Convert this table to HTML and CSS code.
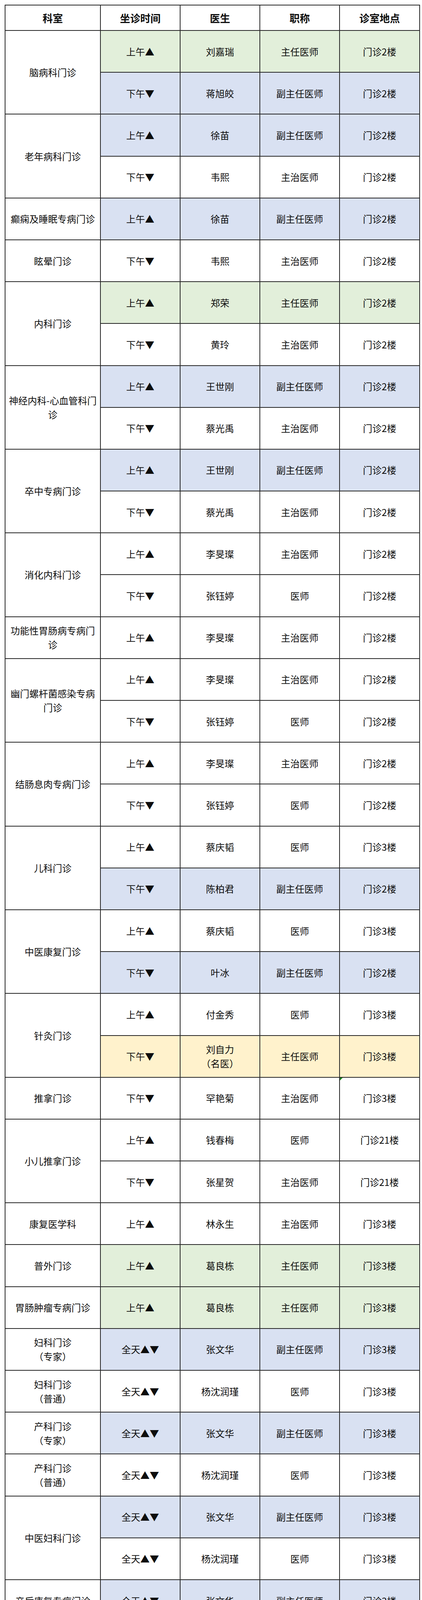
FILE: index.html
```html
<!DOCTYPE html>
<html lang="zh-CN">
<head>
<meta charset="utf-8">
<title>门诊排班表</title>
<link rel="stylesheet" href="styles.css">
</head>
<body>
<div class="page">
<table class="sched">
<colgroup>
<col class="c-dept"><col class="c-time"><col class="c-doc"><col class="c-title"><col class="c-loc">
</colgroup>
<thead>
<tr class="head"><th>科室</th><th>坐诊时间</th><th>医生</th><th>职称</th><th>诊室地点</th></tr>
</thead>
<tbody>
<tr class="green"><td class="dept" rowspan="2">脑病科门诊</td><td>上午▲</td><td>刘嘉瑞</td><td>主任医师</td><td>门诊2楼</td></tr>
<tr class="blue"><td>下午▼</td><td>蒋旭皎</td><td>副主任医师</td><td>门诊2楼</td></tr>

<tr class="blue"><td class="dept" rowspan="2">老年病科门诊</td><td>上午▲</td><td>徐苗</td><td>副主任医师</td><td>门诊2楼</td></tr>
<tr><td>下午▼</td><td>韦熙</td><td>主治医师</td><td>门诊2楼</td></tr>

<tr class="blue"><td class="dept">癫痫及睡眠专病门诊</td><td>上午▲</td><td>徐苗</td><td>副主任医师</td><td>门诊2楼</td></tr>

<tr><td class="dept">眩晕门诊</td><td>下午▼</td><td>韦熙</td><td>主治医师</td><td>门诊2楼</td></tr>

<tr class="green"><td class="dept" rowspan="2">内科门诊</td><td>上午▲</td><td>郑荣</td><td>主任医师</td><td>门诊2楼</td></tr>
<tr><td>下午▼</td><td>黄玲</td><td>主治医师</td><td>门诊2楼</td></tr>

<tr class="blue"><td class="dept" rowspan="2">神经内科-心血管科门诊</td><td>上午▲</td><td>王世刚</td><td>副主任医师</td><td>门诊2楼</td></tr>
<tr><td>下午▼</td><td>蔡光禹</td><td>主治医师</td><td>门诊2楼</td></tr>

<tr class="blue"><td class="dept" rowspan="2">卒中专病门诊</td><td>上午▲</td><td>王世刚</td><td>副主任医师</td><td>门诊2楼</td></tr>
<tr><td>下午▼</td><td>蔡光禹</td><td>主治医师</td><td>门诊2楼</td></tr>

<tr><td class="dept" rowspan="2">消化内科门诊</td><td>上午▲</td><td>李旻璨</td><td>主治医师</td><td>门诊2楼</td></tr>
<tr><td>下午▼</td><td>张钰婷</td><td>医师</td><td>门诊2楼</td></tr>

<tr><td class="dept">功能性胃肠病专病门诊</td><td>上午▲</td><td>李旻璨</td><td>主治医师</td><td>门诊2楼</td></tr>

<tr><td class="dept" rowspan="2">幽门螺杆菌感染专病门诊</td><td>上午▲</td><td>李旻璨</td><td>主治医师</td><td>门诊2楼</td></tr>
<tr><td>下午▼</td><td>张钰婷</td><td>医师</td><td>门诊2楼</td></tr>

<tr><td class="dept" rowspan="2">结肠息肉专病门诊</td><td>上午▲</td><td>李旻璨</td><td>主治医师</td><td>门诊2楼</td></tr>
<tr><td>下午▼</td><td>张钰婷</td><td>医师</td><td>门诊2楼</td></tr>

<tr><td class="dept" rowspan="2">儿科门诊</td><td>上午▲</td><td>蔡庆韬</td><td>医师</td><td>门诊3楼</td></tr>
<tr class="blue"><td>下午▼</td><td>陈柏君</td><td>副主任医师</td><td>门诊2楼</td></tr>

<tr><td class="dept" rowspan="2">中医康复门诊</td><td>上午▲</td><td>蔡庆韬</td><td>医师</td><td>门诊3楼</td></tr>
<tr class="blue"><td>下午▼</td><td>叶冰</td><td>副主任医师</td><td>门诊2楼</td></tr>

<tr><td class="dept" rowspan="2">针灸门诊</td><td>上午▲</td><td>付金秀</td><td>医师</td><td>门诊3楼</td></tr>
<tr class="yellow"><td>下午▼</td><td>刘自力<br>（名医）</td><td>主任医师</td><td>门诊3楼</td></tr>

<tr><td class="dept">推拿门诊</td><td>下午▼</td><td>罕艳菊</td><td>主治医师</td><td class="flag">门诊3楼</td></tr>

<tr><td class="dept" rowspan="2">小儿推拿门诊</td><td>上午▲</td><td>钱春梅</td><td>医师</td><td>门诊21楼</td></tr>
<tr><td>下午▼</td><td>张星贺</td><td>主治医师</td><td>门诊21楼</td></tr>

<tr><td class="dept">康复医学科</td><td>上午▲</td><td>林永生</td><td>主治医师</td><td>门诊3楼</td></tr>

<tr class="green"><td class="dept">普外门诊</td><td>上午▲</td><td>葛良栋</td><td>主任医师</td><td>门诊3楼</td></tr>

<tr class="green"><td class="dept">胃肠肿瘤专病门诊</td><td>上午▲</td><td>葛良栋</td><td>主任医师</td><td>门诊3楼</td></tr>

<tr class="blue"><td class="dept">妇科门诊<br>（专家）</td><td>全天▲▼</td><td>张文华</td><td>副主任医师</td><td>门诊3楼</td></tr>

<tr><td class="dept">妇科门诊<br>（普通）</td><td>全天▲▼</td><td>杨沈润瑾</td><td>医师</td><td>门诊3楼</td></tr>

<tr class="blue"><td class="dept">产科门诊<br>（专家）</td><td>全天▲▼</td><td>张文华</td><td>副主任医师</td><td>门诊3楼</td></tr>

<tr><td class="dept">产科门诊<br>（普通）</td><td>全天▲▼</td><td>杨沈润瑾</td><td>医师</td><td>门诊3楼</td></tr>

<tr class="blue"><td class="dept" rowspan="2">中医妇科门诊</td><td>全天▲▼</td><td>张文华</td><td>副主任医师</td><td>门诊3楼</td></tr>
<tr><td>全天▲▼</td><td>杨沈润瑾</td><td>医师</td><td>门诊3楼</td></tr>

<tr class="blue"><td class="dept">产后康复专病门诊</td><td>全天▲▼</td><td>张文华</td><td>副主任医师</td><td>门诊3楼</td></tr>

<tr class="blue"><td class="dept">更年期门诊</td><td>全天▲▼</td><td>张文华</td><td>副主任医师</td><td>门诊3楼</td></tr>

<tr><td class="dept">眼耳鼻喉科</td><td>全天▲▼</td><td>李璐璐</td><td>主治医师</td><td>门诊3楼</td></tr>

<tr><td class="dept">眼科</td><td>全天▲▼</td><td>杨静晖</td><td>主治医师</td><td>门诊3楼</td></tr>

<tr><td class="dept" rowspan="2">皮肤科</td><td>全天▲▼</td><td>杨榆婷</td><td>主治医师</td><td>门诊3楼</td></tr>
<tr><td>上午▲午间<span class="tofu">▯</span></td><td>凡福青</td><td>医师</td><td>门诊3楼</td></tr>

<tr><td class="dept" rowspan="2">口腔科门诊</td><td>全天▲▼</td><td>斯那永次</td><td>医师</td><td>门诊4楼</td></tr>
<tr class="blue"><td>上午▲</td><td>李光泽</td><td>副主任医师</td><td>门诊4楼</td></tr>

<tr><td class="dept">骨伤科·疼痛科</td><td>上午▲</td><td>崔菁</td><td>主治医师</td><td>门诊3楼</td></tr>

<tr><td class="dept">体重管理门诊</td><td>下午▼</td><td>陈鸿</td><td>主治医师</td><td>门诊5楼</td></tr>
</tbody>
</table>
</div>
</body>
</html>
```

FILE: styles.css
```css
html, body {
  margin: 0;
  padding: 0;
  background: #ffffff;
}

.page {
  padding: 12px 0 0 12px;
}

.sched {
  border-collapse: collapse;
  table-layout: fixed;
  width: 1061px;
  font-family: "Noto Sans CJK SC", "Noto Sans", "DejaVu Sans", sans-serif;
  font-size: 24px;
  line-height: 36px;
  color: #0d0d0d;
}

.c-dept { width: 244px; }
.c-time { width: 204px; }
.c-doc { width: 204px; }
.c-title { width: 204px; }
.c-loc { width: 205px; }

.sched th,
.sched td {
  border: 2px solid #262626;
  text-align: center;
  vertical-align: middle;
  padding: 0 4px;
  font-weight: 400;
}

.sched .head {
  height: 65px;
}

.sched th {
  font-size: 26px;
  font-weight: 700;
  background: #ffffff;
}

.sched tbody tr {
  height: 107.2px;
}

.sched td.dept {
  background: #ffffff;
}

.green td { background: #e2efda; }
.blue td { background: #d9e1f2; }
.yellow td { background: #fff2cc; }

.green td.dept,
.blue td.dept,
.yellow td.dept { background: #ffffff; }

.tofu {
  font-family: "DejaVu Sans", sans-serif;
  font-size: 22px;
}

.flag {
  position: relative;
}

.flag::before {
  content: "";
  position: absolute;
  left: 0;
  top: 0;
  width: 0;
  height: 0;
  border-top: 7px solid #1e8a1e;
  border-right: 7px solid transparent;
}
```
